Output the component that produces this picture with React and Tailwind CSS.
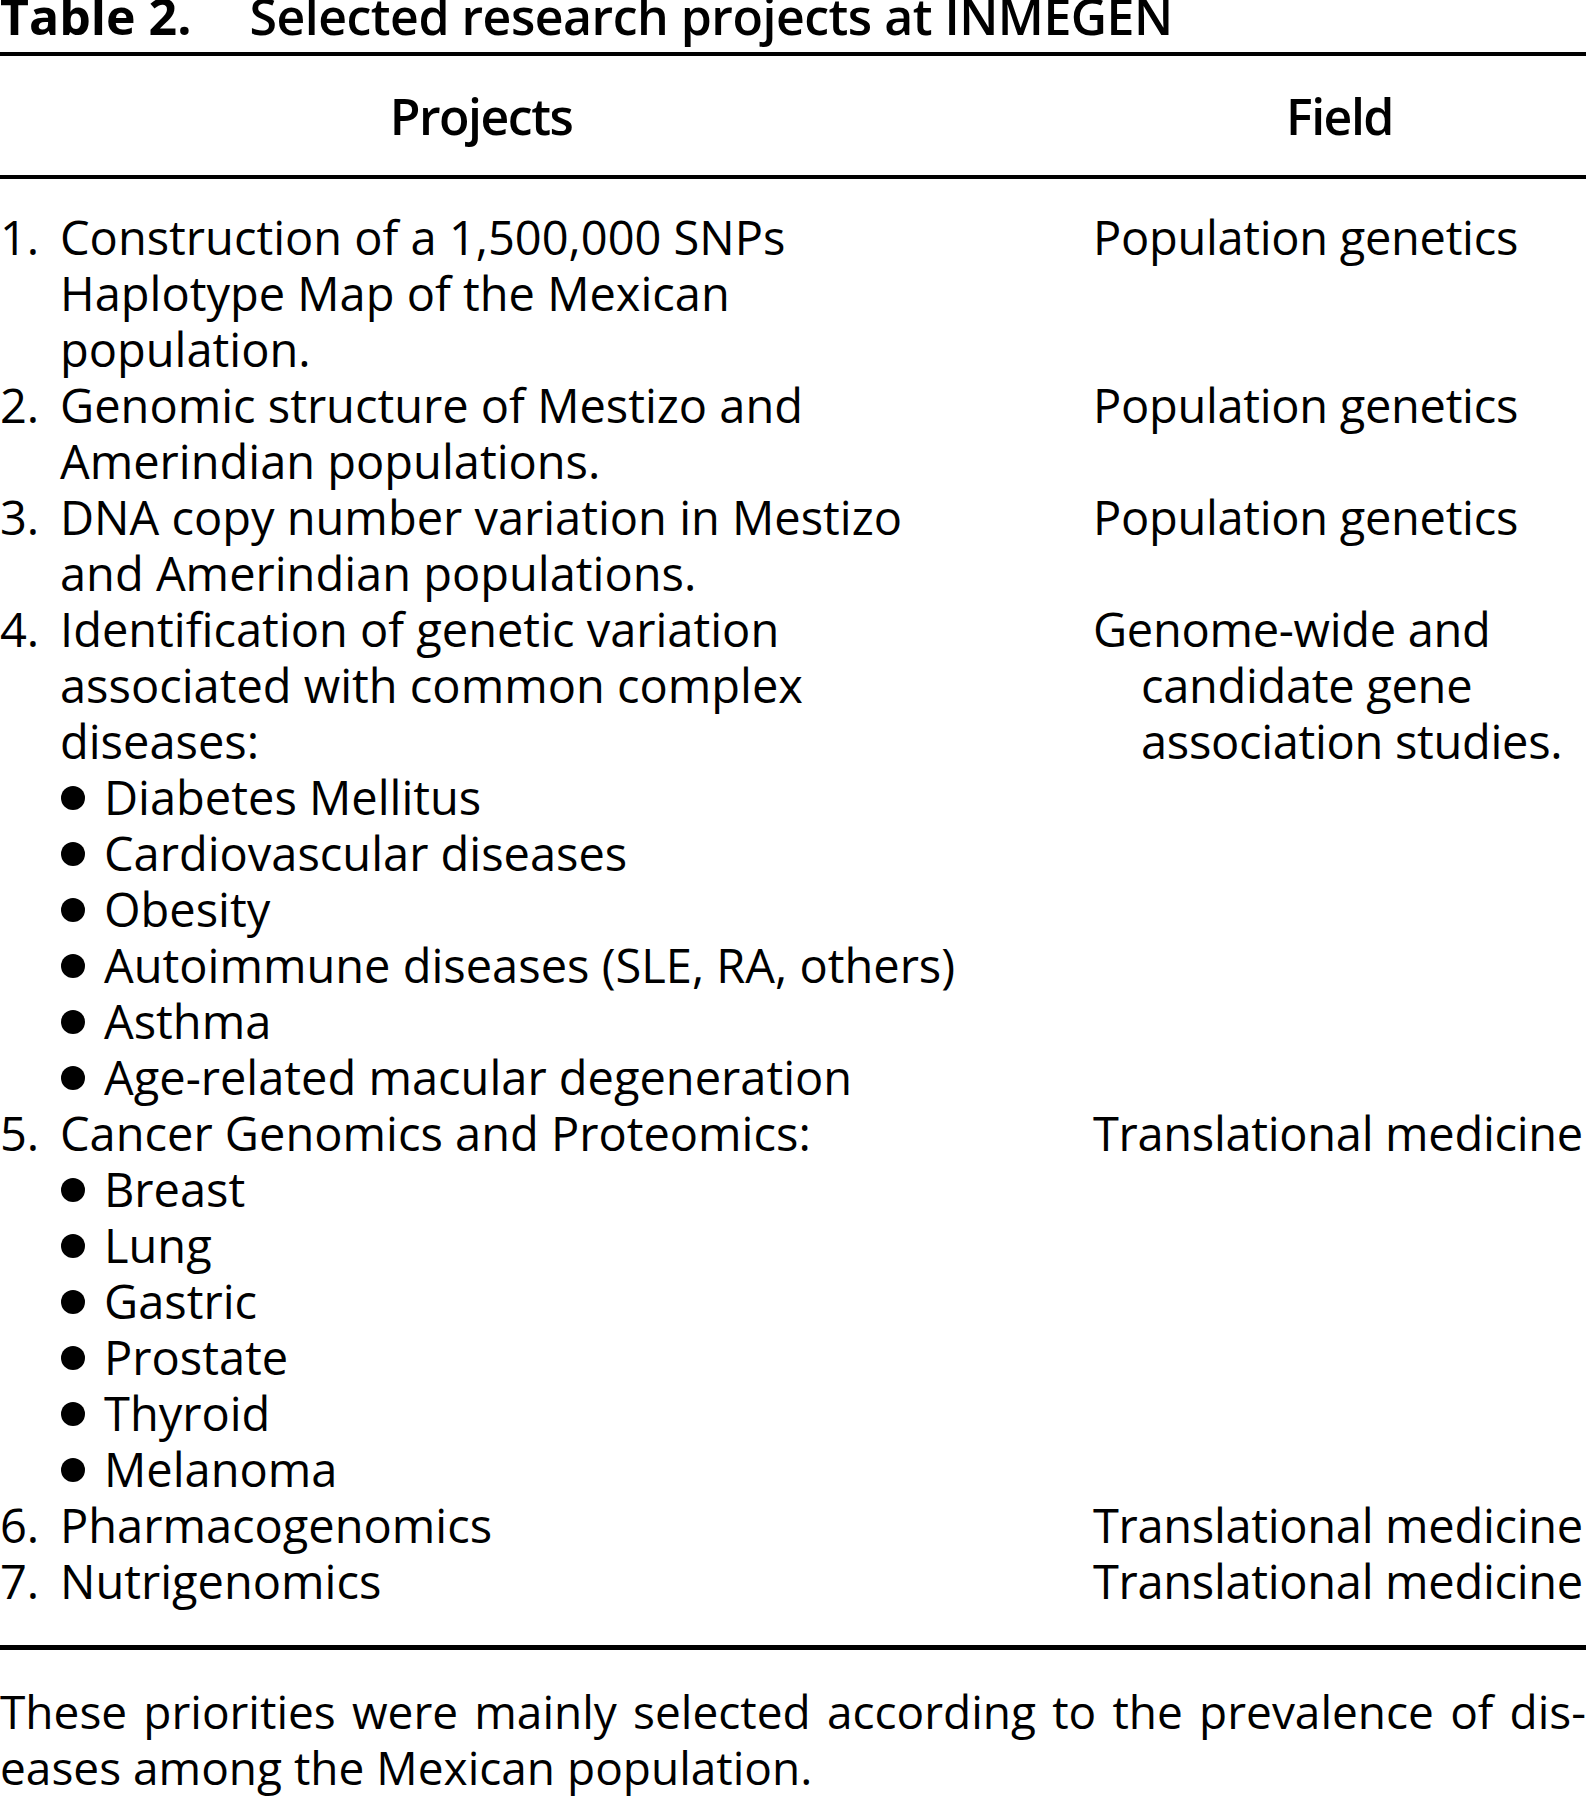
import React from 'react';

const rows = [
  {
    num: '1.',
    lines: ['Construction of a 1,500,000 SNPs', 'Haplotype Map of the Mexican', 'population.'],
    field: ['Population genetics'],
  },
  {
    num: '2.',
    lines: ['Genomic structure of Mestizo and', 'Amerindian populations.'],
    field: ['Population genetics'],
  },
  {
    num: '3.',
    lines: ['DNA copy number variation in Mestizo', 'and Amerindian populations.'],
    field: ['Population genetics'],
  },
  {
    num: '4.',
    lines: ['Identification of genetic variation', 'associated with common complex', 'diseases:'],
    bullets: [
      'Diabetes Mellitus',
      'Cardiovascular diseases',
      'Obesity',
      'Autoimmune diseases (SLE, RA, others)',
      'Asthma',
      'Age-related macular degeneration',
    ],
    field: ['Genome-wide and', 'candidate gene', 'association studies.'],
  },
  {
    num: '5.',
    lines: ['Cancer Genomics and Proteomics:'],
    bullets: ['Breast', 'Lung', 'Gastric', 'Prostate', 'Thyroid', 'Melanoma'],
    field: ['Translational medicine'],
  },
  { num: '6.', lines: ['Pharmacogenomics'], field: ['Translational medicine'] },
  { num: '7.', lines: ['Nutrigenomics'], field: ['Translational medicine'] },
];

const App = () => {
  return (
    <div className="w-[1586px] h-[1800px] overflow-hidden bg-white text-black font-['Open_Sans',sans-serif]">
      {/* caption */}
      <div className="h-[32px] leading-[32px] text-[50px] whitespace-nowrap">
        <span className="font-bold">Table 2.</span>
        <span className="font-semibold tracking-[-0.5px] ml-[58px]">Selected research projects at INMEGEN</span>
      </div>

      <div className="mt-[20px] h-[4px] bg-black" />

      {/* header */}
      <div className="grid grid-cols-[962px_1fr] gap-x-[131px] h-[119px] pt-[2px] leading-[117px] text-[50px] font-semibold tracking-[-1.5px]">
        <div className="text-center">Projects</div>
        <div className="text-center">Field</div>
      </div>

      <div className="h-[4px] bg-black" />

      {/* body */}
      <div className="pt-[30px] text-[47px] leading-[56px]">
        {rows.map((row) => (
          <div key={row.num} className="grid grid-cols-[962px_1fr] gap-x-[131px]">
            <div>
              <div className="flex">
                <span className="w-[60px] shrink-0">{row.num}</span>
                <div className="whitespace-nowrap">
                  {row.lines.map((line, i) => (
                    <div key={i}>{line}</div>
                  ))}
                </div>
              </div>
              {row.bullets &&
                row.bullets.map((b, i) => (
                  <div key={i} className="flex items-start pl-[61px] whitespace-nowrap">
                    <span className="mt-[17px] w-[24px] h-[24px] rounded-full bg-black shrink-0" />
                    <span className="ml-[19px]">{b}</span>
                  </div>
                ))}
            </div>
            <div className="whitespace-nowrap tracking-[-0.3px]">
              {row.field.map((f, i) => (
                <div key={i} className={i > 0 ? 'pl-[48px]' : ''}>
                  {f}
                </div>
              ))}
            </div>
          </div>
        ))}
      </div>

      <div className="mt-[36px] h-[5px] bg-black" />

      {/* footnote */}
      <div className="mt-[33px] text-[46px] leading-[56px]">
        <div className="text-justify [text-align-last:justify] whitespace-nowrap">
          These priorities were mainly selected according to the prevalence of dis-
        </div>
        <div>eases among the Mexican population.</div>
      </div>
    </div>
  );
};

export default App;
